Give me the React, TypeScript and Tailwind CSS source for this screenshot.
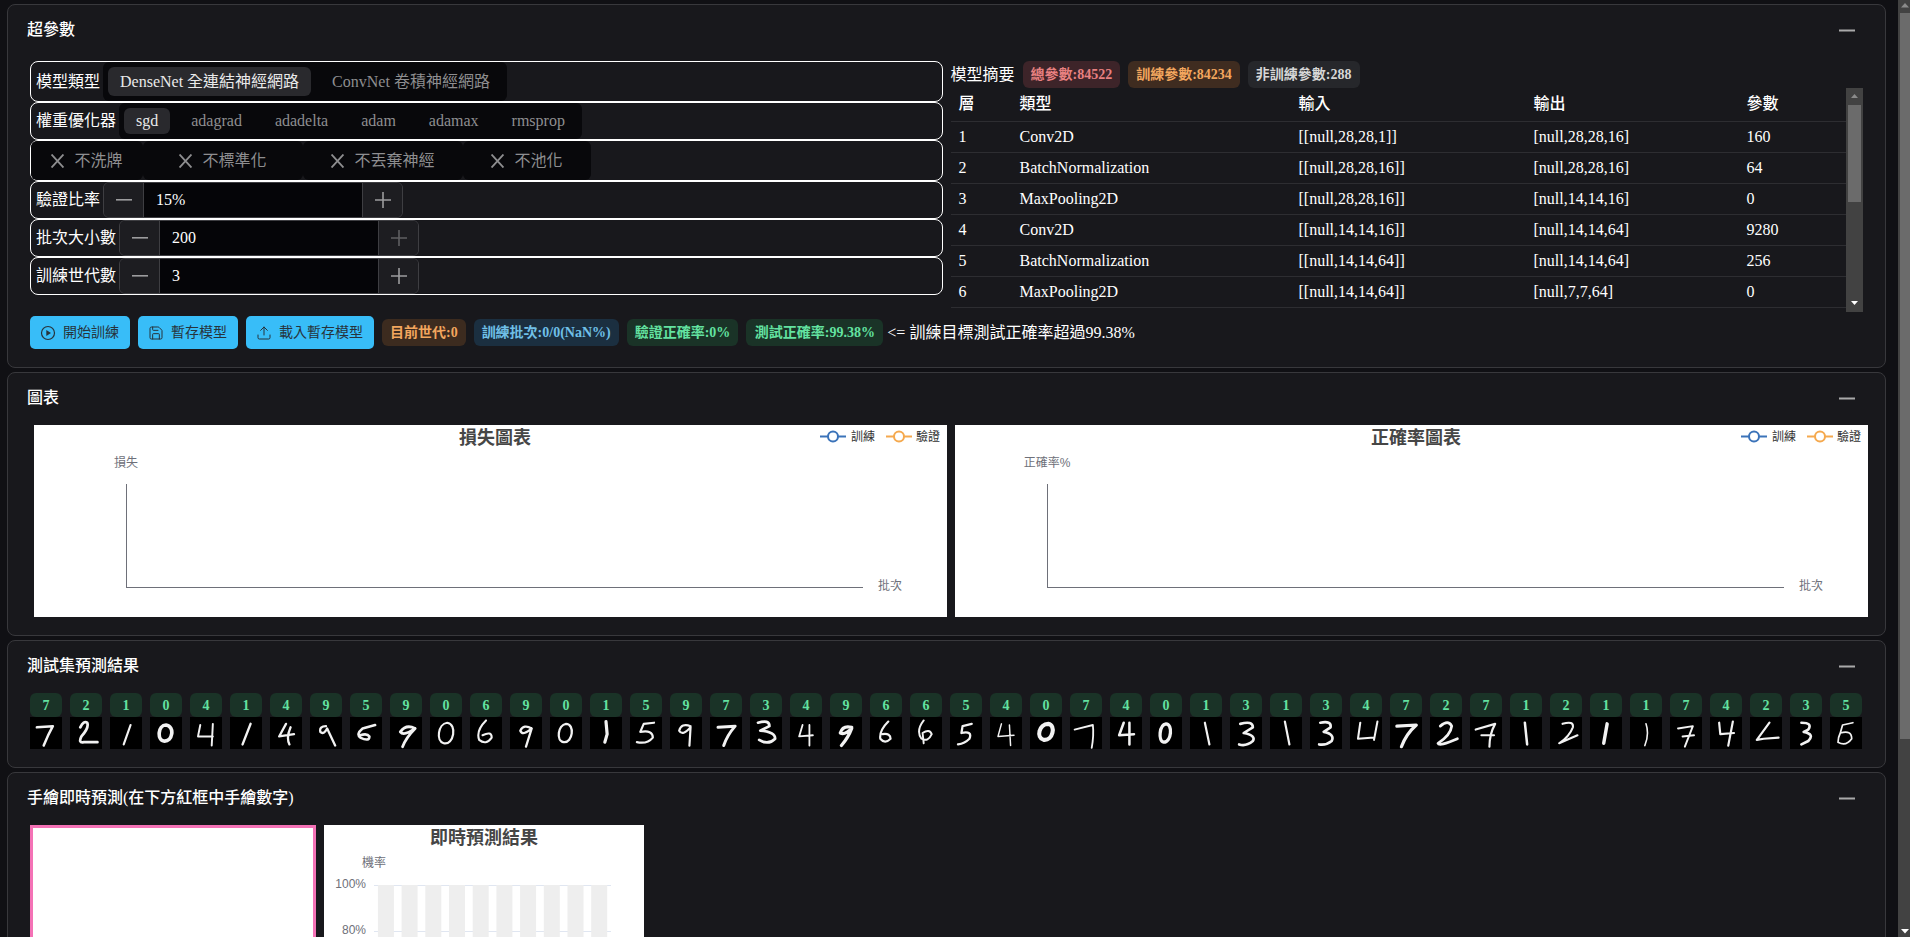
import React from "react";
import { Save, Upload } from "lucide-react";

const digits: { l: string; d: string; w?: number }[] = [
  { l: "7", d: "M6 9 L20 8 Q16 15 12 25", w: 2.2 },
  { l: "2", d: "M9 9 Q12 3 15 5 Q17 9 10 17 Q7 23 12 22 L24 22", w: 2.4 },
  { l: "1", d: "M18 7 L12 24", w: 1.9 },
  { l: "0", d: "M14 7 C7 7 6 20 12 21 C20 22 22 8 14 7 Z", w: 3.2 },
  { l: "4", d: "M9 7 L7 17 L20 17 M20 6 L19 25", w: 1.7 },
  { l: "1", d: "M18 6 L11 24", w: 2.1 },
  { l: "4", d: "M14 6 L8 17 L21 15 M18 9 Q14 18 17 24", w: 2 },
  { l: "9", d: "M14 8 Q8 8 9 13 Q12 16 15 10 L22 25", w: 2 },
  { l: "5", d: "M22 7 L11 10 Q5 15 9 18 Q17 22 17 17 Q15 14 9 16", w: 2.2 },
  { l: "9", d: "M22 10 Q14 6 9 13 Q12 17 22 10 Q14 18 11 26", w: 2.4 },
  { l: "0", d: "M15 5 C7 6 5 21 12 23 C21 25 24 6 15 5 Z", w: 1.9 },
  { l: "6", d: "M14 3 Q5 12 8 20 Q14 25 19 18 Q19 12 11 16", w: 1.8 },
  { l: "9", d: "M19 10 Q12 6 9 12 Q11 17 19 10 L14 26", w: 2 },
  { l: "0", d: "M14 6 C7 7 5 21 12 22 C20 23 22 6 14 6 Z", w: 2 },
  { l: "1", d: "M14 4 L15 15 L13 22", w: 2.8 },
  { l: "5", d: "M21 5 L12 6 L9 13 Q20 11 20 18 Q15 24 6 22", w: 1.9 },
  { l: "9", d: "M18 8 Q10 5 8 12 Q11 17 18 9 L17 25", w: 1.9 },
  { l: "7", d: "M7 9 L22 8 Q15 16 12 25", w: 2.6 },
  { l: "3", d: "M7 5 Q17 2 17 8 L9 12 Q22 13 22 19 Q16 25 8 20", w: 2.4 },
  { l: "4", d: "M11 7 L8 17 L20 16 M17 7 L17 25", w: 1.6 },
  { l: "9", d: "M19 9 Q11 7 9 14 Q13 16 19 10 Q16 18 10 25", w: 2.8 },
  { l: "6", d: "M16 4 Q8 12 9 19 Q13 24 18 19 Q18 14 11 15", w: 1.9 },
  { l: "6", d: "M12 3 Q5 12 10 19 Q16 22 19 15 Q17 10 11 14 L12 23", w: 1.7 },
  { l: "5", d: "M19 6 L11 8 L10 14 Q20 12 17 19 Q13 23 7 24", w: 2 },
  { l: "4", d: "M10 6 L7 17 L21 16 M17 7 L18 25", w: 1.3 },
  { l: "0", d: "M16 6 C8 6 5 18 12 20 C20 21 23 7 16 6 Z", w: 3.6 },
  { l: "7", d: "M4 11 L20 7 Q21 16 19 27", w: 1.6 },
  { l: "4", d: "M12 5 L8 16 L21 15 M17 5 L17 24", w: 2.2 },
  { l: "0", d: "M14 6 C8 7 7 21 12 22 C19 22 20 6 14 6 Z", w: 2.9 },
  { l: "1", d: "M13 5 L17 24", w: 1.9 },
  { l: "3", d: "M9 6 Q20 3 20 9 L12 14 Q23 16 20 21 Q14 26 8 24", w: 2.3 },
  { l: "1", d: "M13 4 L17 24", w: 1.9 },
  { l: "3", d: "M9 5 Q19 3 18 9 L12 13 Q22 15 19 21 Q14 25 8 24", w: 2.3 },
  { l: "4", d: "M9 5 L7 19 L21 18 M24 4 L21 20", w: 1.8 },
  { l: "7", d: "M6 8 L23 7 Q14 15 10 26", w: 2.8 },
  { l: "2", d: "M9 8 Q16 2 19 8 Q18 16 7 23 Q8 26 24 19", w: 2.4 },
  { l: "7", d: "M5 11 L22 6 Q17 15 17 26 M10 16 L21 16", w: 1.9 },
  { l: "1", d: "M13 5 L15 24", w: 2.2 },
  { l: "2", d: "M11 6 Q21 3 20 9 Q17 17 8 23 L24 16", w: 1.8 },
  { l: "1", d: "M15 6 L12 23", w: 3 },
  { l: "1", d: "M14 6 Q17 15 13 25", w: 1.4 },
  { l: "7", d: "M7 10 L20 8 L13 26 M11 17 L21 16", w: 1.7 },
  { l: "4", d: "M8 5 L9 15 L21 14 M20 4 L16 25", w: 1.9 },
  { l: "2", d: "M17 5 L6 20 L12 19 L25 18", w: 1.9 },
  { l: "3", d: "M10 5 Q20 5 16 11 L12 13 Q22 15 16 21 L10 24", w: 2.3 },
  { l: "5", d: "M20 5 L11 7 L9 14 Q19 11 19 19 Q14 26 7 22 Q7 18 9 14", w: 1.5 },
];

const layers = [
  ["1", "Conv2D", "[[null,28,28,1]]", "[null,28,28,16]", "160"],
  ["2", "BatchNormalization", "[[null,28,28,16]]", "[null,28,28,16]", "64"],
  ["3", "MaxPooling2D", "[[null,28,28,16]]", "[null,14,14,16]", "0"],
  ["4", "Conv2D", "[[null,14,14,16]]", "[null,14,14,64]", "9280"],
  ["5", "BatchNormalization", "[[null,14,14,64]]", "[null,14,14,64]", "256"],
  ["6", "MaxPooling2D", "[[null,14,14,64]]", "[null,7,7,64]", "0"],
];

function Card({ title, children }: { title: string; children: React.ReactNode }) {
  return (
    <section className="shrink-0 rounded-[8px] border border-[#38383c] bg-[#18181c] pb-[18px]">
      <div className="flex h-[52px] items-center justify-between pb-[2px] pl-[19px] pr-[30px]">
        <h2 className="text-[16px] font-medium leading-6 text-white">{title}</h2>
        <svg width="16" height="3" viewBox="0 0 16 3" aria-hidden="true">
          <rect y="0.5" width="16" height="2" fill="#a9a9aa" />
        </svg>
      </div>
      {children}
    </section>
  );
}

function Stepper({ label, value, dimPlus }: { label: string; value: string; dimPlus?: boolean }) {
  return (
    <div className="flex h-[38px] items-center rounded-[8px] border border-white pl-[5px]">
      <span className="mr-[3px] text-[16px] text-white">{label}</span>
      <div className="flex h-[36px] w-[300px] overflow-hidden rounded-[6px] border border-[#3e3e42]">
        <div className="flex w-[40px] items-center justify-center border-r border-[#3e3e42] bg-[#1d1d21]">
          <svg width="16" height="16" viewBox="0 0 16 16" aria-hidden="true">
            <rect y="7" width="16" height="1.6" fill="#9c9c9e" />
          </svg>
        </div>
        <div className="flex flex-1 items-center bg-[#050508] pl-[12px] text-[16px] text-white">{value}</div>
        <div className="flex w-[40px] items-center justify-center border-l border-[#3e3e42] bg-[#1d1d21]">
          <svg width="16" height="16" viewBox="0 0 16 16" aria-hidden="true">
            <path d="M0 8H16M8 0V16" stroke={dimPlus ? "#5f5f62" : "#9c9c9e"} strokeWidth="1.6" />
          </svg>
        </div>
      </div>
    </div>
  );
}

function Toggle({ label, width }: { label: string; width: string }) {
  return (
    <div className={`flex h-full items-center justify-center gap-[10px] rounded-[6px] bg-[#08080b] text-[16px] text-[#8e8e90] ${width}`}>
      <svg width="13" height="14" viewBox="0 0 13 14" aria-hidden="true">
        <path d="M0.5 0.5L12.5 13.5M12.5 0.5L0.5 13.5" stroke="#8e8e90" strokeWidth="1.9" />
      </svg>
      {label}
    </div>
  );
}

function LineChart({ title, yName }: { title: string; yName: string }) {
  return (
    <div className="h-[192px] w-[913px] shrink-0 bg-white">
      <svg width="913" height="192" viewBox="0 0 913 192" className="[font-family:'Liberation_Sans','Noto_Sans_CJK_TC',sans-serif]">
        <text x="461" y="19" textAnchor="middle" fontSize="18" fontWeight="700" fill="#464646">{title}</text>
        <path d="M786 11.5H812" stroke="#3b73b9" strokeWidth="2" />
        <circle cx="799" cy="11.5" r="5" fill="#fff" stroke="#3b73b9" strokeWidth="2" />
        <text x="817" y="15.5" fontSize="12" fill="#333">訓練</text>
        <path d="M852 11.5H878" stroke="#f5a94e" strokeWidth="2" />
        <circle cx="865" cy="11.5" r="5" fill="#fff" stroke="#f5a94e" strokeWidth="2" />
        <text x="882" y="15.5" fontSize="12" fill="#333">驗證</text>
        <text x="92" y="38" textAnchor="middle" fontSize="12" fill="#6e7079" dominantBaseline="central">{yName}</text>
        <path d="M92.5 59V162" stroke="#6e7079" />
        <path d="M92 162.5H829" stroke="#6e7079" />
        <text x="844" y="161" fontSize="12" fill="#6e7079" dominantBaseline="central">批次</text>
      </svg>
    </div>
  );
}

function LiveChart() {
  const bars = Array.from({ length: 10 }, (_, i) => i);
  return (
    <div className="h-[300px] w-[320px] shrink-0 bg-white">
      <svg width="320" height="300" viewBox="0 0 320 300" className="[font-family:'Liberation_Sans','Noto_Sans_CJK_TC',sans-serif]">
        <text x="160" y="19" textAnchor="middle" fontSize="18" fontWeight="700" fill="#464646">即時預測結果</text>
        <text x="50" y="38" textAnchor="middle" fontSize="12" fill="#6e7079" dominantBaseline="central">機率</text>
        <path d="M50 60.5H287M50 106.5H287M50 152.5H287M50 198.5H287M50 244.5H287" stroke="#e0e6f1" />
        {bars.map((i) => (
          <rect key={i} x={53.9 + i * 23.7} y="60" width="16" height="230" fill="#eeeeee" />
        ))}
        <text x="42" y="59" textAnchor="end" fontSize="12" fill="#6e7079" dominantBaseline="central">100%</text>
        <text x="42" y="105" textAnchor="end" fontSize="12" fill="#6e7079" dominantBaseline="central">80%</text>
      </svg>
    </div>
  );
}

function Tag({ className, children }: { className: string; children: React.ReactNode }) {
  return (
    <span className={`flex h-[27px] shrink-0 items-center justify-center whitespace-nowrap rounded-[6px] px-[8px] text-[14px] font-bold ${className}`}>{children}</span>
  );
}

function Btn({ icon, label }: { icon: React.ReactNode; label: string }) {
  return (
    <button className="flex h-[33px] shrink-0 items-center gap-[7px] rounded-[5px] bg-[#38bdf8] pl-[10px] pr-[11px] text-[14px] text-[#27333b]">
      {icon}
      {label}
    </button>
  );
}

export default function App() {
  return (
    <div className="flex h-screen overflow-hidden bg-[#101014] [font-family:'Liberation_Serif','Noto_Sans_CJK_TC',serif]">
      <main className="flex w-[1898px] shrink-0 flex-col gap-[4px] overflow-hidden pb-0 pl-[7px] pr-[12px] pt-[4px]">
        <Card title="超參數">
          <div className="mx-[22px] mt-[4px]">
            <div className="grid grid-cols-2 gap-x-[8px]">
              <div className="flex flex-col">
                <div className="flex h-[41px] items-center rounded-[8px] border border-white pl-[5px]">
                  <span className="mr-[3px] text-[16px] text-white">模型類型</span>
                  <div className="flex h-[39px] items-center gap-[9px] rounded-[6px] bg-[#08080b] p-[5px] text-[16px] text-[#8e8e90]">
                    <span className="flex h-[29px] items-center rounded-[6px] bg-[#29292d] px-[12px] text-[#e9e9ea]">DenseNet 全連結神經網路</span>
                    <span className="px-[12px]">ConvNet 卷積神經網路</span>
                  </div>
                </div>
                <div className="flex h-[38px] items-center rounded-[8px] border border-white pl-[5px]">
                  <span className="mr-[3px] text-[16px] text-white">權重優化器</span>
                  <div className="flex h-[36px] items-center gap-[9px] rounded-[6px] bg-[#08080b] p-[5px] text-[16px] text-[#8e8e90]">
                    <span className="flex h-[26px] items-center rounded-[6px] bg-[#29292d] px-[12px] text-[#e9e9ea]">sgd</span>
                    <span className="px-[12px]">adagrad</span>
                    <span className="px-[12px]">adadelta</span>
                    <span className="px-[12px]">adam</span>
                    <span className="px-[12px]">adamax</span>
                    <span className="px-[12px]">rmsprop</span>
                  </div>
                </div>
                <div className="flex h-[41px] items-center rounded-[8px] border border-white">
                  <Toggle label="不洗牌" width="w-[112px]" />
                  <Toggle label="不標準化" width="w-[160px]" />
                  <Toggle label="不丟棄神經" width="w-[160px]" />
                  <Toggle label="不池化" width="w-[128px]" />
                </div>
                <Stepper label="驗證比率" value="15%" />
                <Stepper label="批次大小數" value="200" dimPlus />
                <Stepper label="訓練世代數" value="3" />
              </div>

              <div className="flex flex-col">
                <div className="flex h-[27px] items-center gap-[8px]">
                  <span className="text-[16px] text-white">模型摘要</span>
                  <Tag className="bg-[#3d2429] text-[#e88080]">總參數:84522</Tag>
                  <Tag className="bg-[#3f2c20] text-[#f2a65e]">訓練參數:84234</Tag>
                  <Tag className="bg-[#26272b] text-[#d6d6d6]">非訓練參數:288</Tag>
                </div>
                <div className="flex h-[224px]">
                  <div className="flex-1 overflow-hidden">
                    <table className="w-full table-fixed text-left text-[16px] text-white">
                      <thead>
                        <tr className="h-[33px] border-b border-[#2d2d31]">
                          <th className="w-[61px] pl-[8px] font-medium">層</th>
                          <th className="w-[279px] pl-[8px] font-medium">類型</th>
                          <th className="w-[235px] pl-[8px] font-medium">輸入</th>
                          <th className="w-[213px] pl-[8px] font-medium">輸出</th>
                          <th className="pl-[8px] font-medium">參數</th>
                        </tr>
                      </thead>
                      <tbody>
                        {layers.map((r) => (
                          <tr key={r[0]} className="h-[31px] border-b border-[#2d2d31]">
                            {r.map((c, i) => (
                              <td key={i} className="pl-[8px] font-normal">{c}</td>
                            ))}
                          </tr>
                        ))}
                      </tbody>
                    </table>
                  </div>
                  <div className="flex w-[17px] shrink-0 flex-col items-center bg-[#424242]">
                    <svg width="9" height="17" viewBox="0 0 9 17" aria-hidden="true" className="shrink-0">
                      <path d="M4.5 6L8 10H1Z" fill="#8b8b8b" />
                    </svg>
                    <div className="h-[97px] w-[13px] shrink-0 bg-[#6b6b6b]" />
                    <div className="flex-1" />
                    <svg width="9" height="17" viewBox="0 0 9 17" aria-hidden="true" className="shrink-0">
                      <path d="M1 6H8L4.5 10Z" fill="#ffffff" />
                    </svg>
                  </div>
                </div>
              </div>
            </div>

            <div className="mt-[4px] flex h-[33px] items-center gap-[8px]">
              <Btn
                label="開始訓練"
                icon={
                  <svg width="16" height="16" viewBox="0 0 16 16" aria-hidden="true" className="shrink-0">
                    <circle cx="8" cy="8" r="6.5" fill="none" stroke="#27333b" strokeWidth="1.2" />
                    <path d="M6.3 5L11 8L6.3 11Z" fill="#27333b" />
                  </svg>
                }
              />
              <Btn label="暫存模型" icon={<Save size={16} strokeWidth={1.5} className="shrink-0" />} />
              <Btn label="載入暫存模型" icon={<Upload size={16} strokeWidth={1.5} className="shrink-0" />} />
              <Tag className="bg-[#3c2b1f] text-[#f2a65e]">目前世代:0</Tag>
              <Tag className="w-[145px] bg-[#1b2f40] text-[#70c0e8]">訓練批次:0/0(NaN%)</Tag>
              <Tag className="bg-[#1a3327] text-[#63e2a0]">驗證正確率:0%</Tag>
              <Tag className="w-[137px] bg-[#1a3327] text-[#63e2a0]">測試正確率:99.38%</Tag>
              <span className="-ml-[4px] whitespace-nowrap text-[16px] text-white">{"<= 訓練目標測試正確率超過99.38%"}</span>
            </div>
          </div>
        </Card>

        <Card title="圖表">
          <div className="ml-[26px] flex gap-[8px]">
            <LineChart title="損失圖表" yName="損失" />
            <LineChart title="正確率圖表" yName="正確率%" />
          </div>
        </Card>

        <Card title="測試集預測結果">
          <div className="ml-[22px] flex gap-[8px]">
            {digits.map((d, i) => (
              <div key={i} className="flex w-[32px] flex-col">
                <div className="flex h-[24px] items-center justify-center rounded-[6px] bg-[#1a3327] text-[14px] font-bold text-[#63e2a0]">{d.l}</div>
                <svg width="32" height="32" viewBox="0 0 28 28" aria-hidden="true" className="block bg-black">
                  <path d={d.d} fill="none" stroke="#f2f2f2" strokeWidth={d.w} strokeLinecap="round" strokeLinejoin="round" className="blur-[0.3px]" />
                </svg>
              </div>
            ))}
          </div>
        </Card>

        <Card title="手繪即時預測(在下方紅框中手繪數字)">
          <div className="ml-[22px] flex gap-[8px]">
            <div className="h-[300px] w-[286px] shrink-0 border-[3px] border-[#f472b6] bg-white" />
            <LiveChart />
          </div>
        </Card>
      </main>

      <div className="flex w-[12px] shrink-0 flex-col items-end bg-[#424242]">
        <div className="flex h-[13px] w-[10px] shrink-0 items-center justify-center">
          <svg width="10" height="13" viewBox="0 0 10 13" aria-hidden="true">
            <path d="M5 3L9 7.5H1Z" fill="#8b8b8b" />
          </svg>
        </div>
        <div className="h-[726px] w-[10px] shrink-0 bg-[#6b6b6b]" />
        <div className="flex-1" />
        <div className="flex h-[13px] w-[10px] shrink-0 items-center justify-center">
          <svg width="10" height="13" viewBox="0 0 10 13" aria-hidden="true">
            <path d="M1 5H9L5 9.5Z" fill="#ffffff" />
          </svg>
        </div>
      </div>
    </div>
  );
}
